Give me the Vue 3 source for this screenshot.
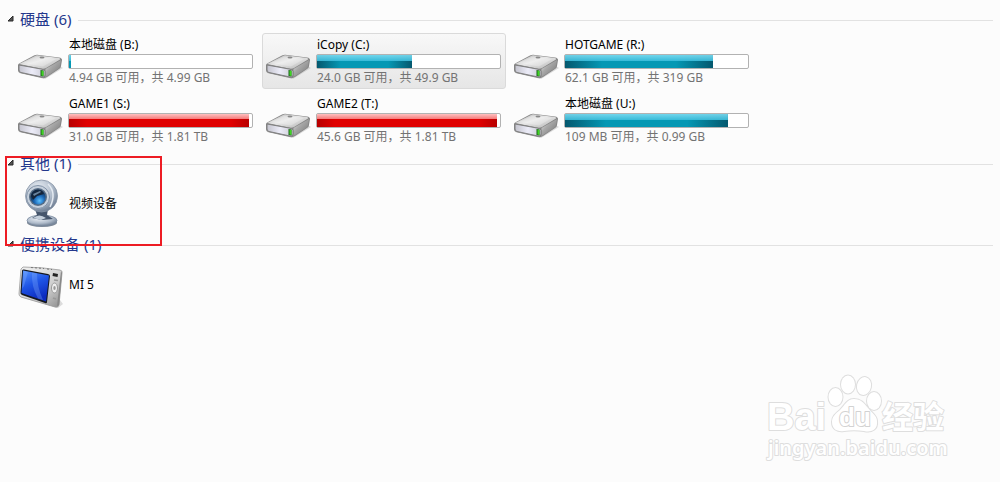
<script setup>
import { ref } from 'vue';

const groups = ref([
  {
    name: '硬盘',
    open: true,
    items: [
      { name: '本地磁盘 (B:)', kind: 'drive', used: 1, info: '4.94 GB 可用，共 4.99 GB' },
      { name: 'iCopy (C:)', kind: 'drive', used: 52, info: '24.0 GB 可用，共 49.9 GB', active: true },
      { name: 'HOTGAME (R:)', kind: 'drive', used: 81, info: '62.1 GB 可用，共 319 GB' },
      { name: 'GAME1 (S:)', kind: 'drive', used: 98.5, info: '31.0 GB 可用，共 1.81 TB' },
      { name: 'GAME2 (T:)', kind: 'drive', used: 98.5, info: '45.6 GB 可用，共 1.81 TB' },
      { name: '本地磁盘 (U:)', kind: 'drive', used: 89, info: '109 MB 可用，共 0.99 GB' },
    ],
  },
  { name: '其他', open: true, items: [{ name: '视频设备', kind: 'camera' }] },
  { name: '便携设备', open: true, items: [{ name: 'MI 5', kind: 'player' }] },
]);

const toggle = (group) => {
  group.open = !group.open;
};
</script>

<template>
  <main class="explorer">
    <section v-for="group in groups" :key="group.name">
      <h2>
        <button class="group-toggle" :aria-expanded="group.open" @click="toggle(group)">
          <svg class="arrow" viewBox="0 0 7 7"><path d="M6 1V6H1Z" fill="#555" stroke="#2a2a2a" stroke-width="1" /></svg>
          <span>{{ group.name }} ({{ group.items.length }})</span>
        </button>
      </h2>
      <ul v-if="group.open">
        <li v-for="item in group.items" :key="item.name" class="tile" :class="[item.kind, { active: item.active }]">
          <svg v-if="item.kind === 'drive'" class="icon" viewBox="0 0 48 48">
            <defs>
              <linearGradient id="drive-top" x1="0" y1="0" x2="1" y2="1">
                <stop offset="0" stop-color="#b5b5b5" />
                <stop offset="0.45" stop-color="#e8e8e8" />
                <stop offset="1" stop-color="#b4b4b4" />
              </linearGradient>
              <linearGradient id="drive-front" x1="0" y1="0" x2="1" y2="0">
                <stop offset="0" stop-color="#c4c4ce" />
                <stop offset="0.5" stop-color="#ececf8" />
                <stop offset="1" stop-color="#cacad4" />
              </linearGradient>
              <linearGradient id="drive-side" x1="0" y1="0" x2="1" y2="1">
                <stop offset="0" stop-color="#f0f0f0" />
                <stop offset="0.4" stop-color="#a8a8a8" />
                <stop offset="1" stop-color="#747474" />
              </linearGradient>
            </defs>
            <path d="M3 36L29 42L47 31L44 29Z" fill="#bbb" opacity="0.5" />
            <path d="M2 28Q2 27 4 26L18 18.5Q20 17.500 23 18L43 20.5Q46 21 46 23L45 29Q45 31 43 32L31 40Q29 41.500 26 41L4 36Q2 35.500 2 33Z" fill="#858585" />
            <path d="M3 27L19 19Q20 18 23 18.500L43 21Q45 21.500 44 22.500L30 31Q28 32 25 31.500Z" fill="url(#drive-top)" />
            <path d="M7 26L20 20L40 22L27 29.500Z" fill="#fff" opacity="0.25" />
            <path d="M29.500 32L45 23L44 29Q44 31 42 32L29.500 40Z" fill="url(#drive-side)" />
            <path d="M3 28L25 32Q29 32.500 29 34.500V38Q29 41 26 40L5 35.500Q3 35 3 33Z" fill="url(#drive-front)" stroke="#808080" stroke-width="1" />
            <ellipse cx="26" cy="20.500" rx="2.500" ry="1" fill="#888" />
            <path d="M24.500 33L27.500 33.500V39.500L24.500 39Z" fill="#1c631c" />
            <path d="M25.500 33.500L27.500 34V39L25.500 38.500Z" fill="#3fd522" />
          </svg>
          <svg v-else-if="item.kind === 'camera'" class="icon" viewBox="0 0 48 48">
            <defs>
              <radialGradient id="camera-shell" cx="0.4" cy="0.3" r="0.75">
                <stop offset="0" stop-color="#f0f4f9" />
                <stop offset="0.6" stop-color="#b0bccb" />
                <stop offset="1" stop-color="#64748a" />
              </radialGradient>
              <radialGradient id="camera-lens" cx="0.6" cy="0.75" r="0.75">
                <stop offset="0" stop-color="#5bc0ff" />
                <stop offset="0.45" stop-color="#1c68b5" />
                <stop offset="1" stop-color="#0c1f38" />
              </radialGradient>
            </defs>
            <ellipse cx="26" cy="43.500" rx="15" ry="4.500" fill="#7d8896" />
            <ellipse cx="26" cy="41.500" rx="15" ry="5.500" fill="url(#camera-shell)" stroke="#7b8ba0" stroke-width="0.800" />
            <path d="M19 30L32 30L31 36L37 40L26 41L16 39L21 36Z" fill="#46566c" />
            <path d="M17 39Q23 34 30 39L25 41Z" fill="#c4cfdb" />
            <circle cx="25.500" cy="17" r="16" fill="url(#camera-shell)" stroke="#8794a6" stroke-width="0.800" />
            <path d="M32 5Q41 14 34 28" fill="none" stroke="#e4eaf1" stroke-width="1.500" />
            <circle cx="22" cy="18" r="11.500" fill="#c6d0dc" stroke="#8293a8" />
            <circle cx="22" cy="18" r="9" fill="#566c84" />
            <circle cx="22" cy="18" r="7.500" fill="url(#camera-lens)" />
            <path d="M15 17Q19 10 26 12L28 15L21 17L17 21Z" fill="#14243a" />
            <path d="M17 15L24 12L25 13L18 17Z" fill="#6a849d" />
          </svg>
          <svg v-else class="icon" viewBox="0 0 48 48">
            <defs>
              <linearGradient id="player-body" x1="0" y1="0" x2="1" y2="1">
                <stop offset="0" stop-color="#f3f3f3" />
                <stop offset="0.6" stop-color="#cfcfcf" />
                <stop offset="1" stop-color="#8a8a8a" />
              </linearGradient>
              <linearGradient id="player-screen" x1="0" y1="0" x2="0.4" y2="1">
                <stop offset="0" stop-color="#5795ff" />
                <stop offset="0.5" stop-color="#1f55e6" />
                <stop offset="1" stop-color="#0c2bc0" />
              </linearGradient>
            </defs>
            <path d="M4 37L42 48L47 44L44 40Z" fill="#bbb" opacity="0.500" />
            <path d="M7 7Q25 7 44 10Q47 11 46 13L43 45Q42 48 39 47L5 37Q3 36 3 34L5 9Z" fill="url(#player-body)" stroke="#999" stroke-width="0.800" />
            <path d="M45 11L46 13L43 45Q42 46 41 46Z" fill="#888" />
            <path d="M8 9.500L32 14Q34 14.500 34 16L31 42Q31 44 29 43L6 35Q4 34 4.500 32L6 11Q6 9 8 9.500Z" fill="#15181f" />
            <path d="M7 10.500L33 15.500L30 41.500L5.500 33Z" fill="url(#player-screen)" />
            <path d="M16 12.500L21 13.500Q21 27 27 40L22 38.500Q15 26 16 12.500ZM8 11L12 12L8 26L6 29Z" fill="#8bb6ff" opacity="0.300" />
            <path d="M15 7.500L28 8.500M31 9L36 9.500" stroke="#777" stroke-width="1" stroke-dasharray="2 2" />
            <path d="M37 13L42 14L41.500 17L36.500 16Z" fill="#222" />
            <path d="M38 20L42 20.500M37 38L40 39" stroke="#999" stroke-width="1.500" />
            <ellipse cx="38.500" cy="28" rx="3" ry="5" fill="#eee" stroke="#999" />
            <ellipse cx="38.500" cy="28" rx="1.200" ry="2" fill="#999" />
          </svg>
          <div class="body">
            <div class="name">{{ item.name }}</div>
            <template v-if="item.info">
              <div class="bar">
                <div class="fill" :class="{ full: item.used > 90 }" :style="{ width: item.used + '%' }"></div>
              </div>
              <div class="info">{{ item.info }}</div>
            </template>
          </div>
        </li>
      </ul>
    </section>

    <div class="highlight"></div>

    <svg class="watermark" viewBox="0 0 200 105">
      <g fill="#fff" stroke="#dedede" stroke-width="2" paint-order="stroke" stroke-linejoin="round">
        <text class="brand" x="12" y="65">Bai</text>
        <ellipse cx="80.500" cy="32" rx="7" ry="9" />
        <ellipse cx="93" cy="19.500" rx="7" ry="9" />
        <ellipse cx="109" cy="21" rx="7" ry="9" transform="rotate(12 109 21)" />
        <ellipse cx="119" cy="36" rx="7" ry="9" />
        <path d="M99 34C92 34 90 40 85 45C80 49 77 52 77 57C77 64 82 67 89 66C96 65 102 65 109 66C117 68 123 64 122 56C122 51 117 48 113 43C109 38 106 34 99 34Z" />
        <text class="du" x="84" y="61">du</text>
        <text class="brand-cn" x="127" y="63">经验</text>
        <text class="site" x="13" y="90">jingyan.baidu.com</text>
      </g>
    </svg>
  </main>
</template>

<style>
body {
  margin: 0;
  background: #fcfcfc;
}
</style>

<style scoped>
.explorer {
  position: relative;
  min-height: 100vh;
  box-sizing: border-box;
  padding: 9px 7px 0;
  overflow: hidden;
  font-family: "Noto Sans", "Noto Sans CJK SC", sans-serif;
  font-size: 12px;
  color: #000;
}

h2 {
  display: flex;
  align-items: center;
  gap: 7px;
  height: 22px;
  margin: 0;
}

h2::after {
  content: "";
  flex: 1;
  height: 1px;
  background: #e2e2e2;
}

.group-toggle {
  display: flex;
  align-items: center;
  gap: 6px;
  padding: 0 0 3px;
  border: 0;
  background: none;
  color: #24388c;
  font-family: inherit;
  font-size: 15px;
  line-height: 20px;
  white-space: nowrap;
}

.arrow {
  width: 7px;
  height: 7px;
}

ul {
  display: grid;
  grid-template-columns: repeat(auto-fill, 244px);
  gap: 3px 4px;
  margin: 0;
  padding: 2px 0 5px 7px;
  list-style: none;
}

.tile {
  display: flex;
  align-items: center;
  gap: 4px;
  box-sizing: border-box;
  height: 52px;
  padding: 0 4px 0 1px;
  border: 1px solid transparent;
  border-radius: 3px;
}

.drive {
  height: 56px;
}

.active {
  border-color: #dadada;
  background: linear-gradient(#f8f8f8, #e6e6e6);
}

.icon {
  flex: none;
  width: 48px;
  height: 48px;
}

.body {
  flex: 1;
}

.name,
.info {
  padding-left: 1px;
  line-height: 17px;
  white-space: nowrap;
}

.info {
  color: #737373;
}

.bar {
  box-sizing: border-box;
  height: 15px;
  margin-top: 1px;
  border: 1px solid #b2b2b2;
  border-radius: 2px;
  background: #fff;
}

.fill {
  height: 100%;
  background:
    linear-gradient(rgba(125, 220, 242, 0.9), rgba(60, 190, 220, 0.9)) top / 100% 6px no-repeat,
    linear-gradient(90deg, #04586e, #0598b4 25%, #0598b4 75%, #04586e);
}

.full {
  background:
    linear-gradient(#ffc0c0, #f47a7a) top / 100% 5px no-repeat,
    linear-gradient(90deg, #b80000, #e00000 10%, #e00000 90%, #b80000);
}

.highlight {
  position: absolute;
  top: 156px;
  left: 5px;
  box-sizing: border-box;
  width: 157px;
  height: 90px;
  border: 2px solid #ed1c24;
  pointer-events: none;
}

.watermark {
  position: absolute;
  right: 45px;
  bottom: 12px;
  width: 200px;
  height: 105px;
  pointer-events: none;
}

.brand {
  font: bold 38px "Liberation Sans", sans-serif;
}

.du {
  font: bold 26px "Liberation Sans", sans-serif;
  stroke: #d2d2d2;
}

.brand-cn {
  font: bold 31px "Noto Sans CJK SC", sans-serif;
}

.site {
  font: 600 20px "Noto Sans", sans-serif;
}
</style>
